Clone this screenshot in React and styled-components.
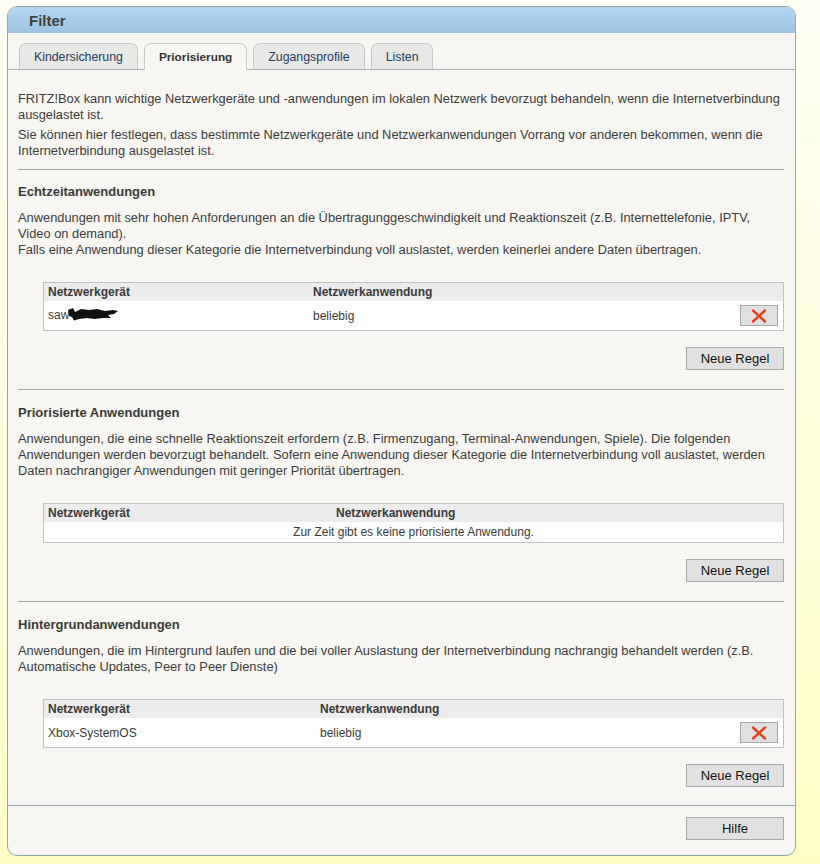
import styled, { createGlobalStyle } from 'styled-components';

const GlobalStyle = createGlobalStyle`
  html, body {
    margin: 0;
    padding: 0;
  }
  body {
    min-height: 864px;
    background: linear-gradient(to bottom, #fffff4 0%, #ffffdc 55%, #ffffc6 100%);
    font-family: "Liberation Sans", Arial, sans-serif;
    color: #3c3c3c;
  }
`;

const Page = styled.div`
  padding: 6px 0 0 7px;
`;

const Panel = styled.div`
  width: 787px;
  border: 1px solid #8fa8a9;
  border-radius: 10px;
  background: #f7f6f2;
  overflow: hidden;
`;

const PanelHeader = styled.div`
  height: 26px;
  display: flex;
  align-items: center;
  padding-left: 21px;
  background: linear-gradient(to bottom, #b4d6f4, #9fc2e1);
  font-size: 15px;
  font-weight: bold;
  color: #404040;
`;

const TabBar = styled.div`
  display: flex;
  gap: 6px;
  padding: 10px 0 0 11px;
  border-bottom: 1px solid #a3b0b1;
`;

const Tab = styled.div`
  height: 25px;
  display: flex;
  align-items: center;
  padding: 0 14px;
  border: 1px solid #c9c9c9;
  border-bottom: none;
  border-radius: 7px 7px 0 0;
  background: ${({ $active }) => ($active ? '#f7f6f2' : '#e8e8e7')};
  color: ${({ $active }) => ($active ? '#333' : '#223d63')};
  font-size: ${({ $active }) => ($active ? '11.8px' : '12.3px')};
  font-weight: ${({ $active }) => ($active ? 'bold' : 'normal')};
  margin-bottom: ${({ $active }) => ($active ? '-1px' : '0')};
  padding-bottom: ${({ $active }) => ($active ? '1px' : '0')};
`;

const Content = styled.div`
  padding: 21px 11px 18px 10px;
  font-size: 12.85px;
  line-height: 16px;
`;

const Text = styled.p`
  margin: ${({ $top }) => $top || 0}px 0 0;
`;

const Divider = styled.div`
  height: 1px;
  background: #9faaab;
  margin-top: ${({ $top }) => $top}px;
`;

const Heading = styled.h3`
  margin: ${({ $top }) => $top}px 0 0;
  font-size: 13px;
  line-height: 16px;
  font-weight: bold;
  color: #3a3a3a;
`;

const RuleTable = styled.table`
  width: calc(100% - 25px);
  margin: 24px 0 0 25px;
  border: 1px solid #c2c2c2;
  border-collapse: collapse;
  font-size: 12px;
  line-height: 14px;
  color: #3a3a3a;
`;

const HeadCell = styled.th`
  height: 18px;
  padding: 0 4px;
  background: #ececec;
  text-align: left;
  font-weight: bold;
  width: ${({ $width }) => ($width ? `${$width}px` : 'auto')};
`;

const Cell = styled.td`
  height: ${({ $tall }) => ($tall ? '29px' : '20px')};
  padding: 0 4px;
  background: #fff;
  text-align: ${({ $center }) => ($center ? 'center' : 'left')};
`;

const ActionCell = styled.td`
  background: #fff;
  width: 44px;
  padding: 0 5px 0 0;
  text-align: right;
`;

const DeleteButton = styled.button`
  width: 38px;
  height: 21px;
  display: inline-flex;
  align-items: center;
  justify-content: center;
  padding: 0;
  background: #e0e0e0;
  border: 1px solid #a6a6a6;
  vertical-align: middle;
`;

const ButtonRow = styled.div`
  display: flex;
  justify-content: flex-end;
  margin-top: ${({ $top }) => $top}px;
`;

const Button = styled.button`
  width: 98px;
  height: 23px;
  padding: 0;
  background: #e1e1e1;
  border: 1px solid #a9a9a9;
  font-family: "Liberation Sans", Arial, sans-serif;
  font-size: 13px;
  color: #111;
`;

const Footer = styled.div`
  border-top: 1px solid #8fa8a9;
  padding: 11px 11px 15px 0;
  display: flex;
  justify-content: flex-end;
`;

const Masked = styled.span`
  display: inline-block;
  vertical-align: middle;
  margin-left: -2px;
`;

const CrossIcon = () => (
  <svg width="16" height="14" viewBox="0 0 16 14">
    <path d="M2 1.5 L14 12.5 M14 1.5 L2 12.5" stroke="#e5401a" strokeWidth="2.4" strokeLinecap="round" />
  </svg>
);

// black marker stroke over part of the device name
const Scribble = () => (
  <Masked>
    <svg width="52" height="14" viewBox="0 0 52 14">
      <path
        d="M1 3 L6 1 L8 5 L14 2 L22 3 L30 2 L38 4 L46 3 L51 4 L47 7 L41 8 L44 11 L36 11 L28 12 L20 11 L12 12 L7 13.5 L5 10 L2 9 Z"
        fill="#111"
      />
    </svg>
  </Masked>
);

const sections = [
  {
    title: 'Echtzeitanwendungen',
    text: [
      'Anwendungen mit sehr hohen Anforderungen an die Übertragunggeschwindigkeit und Reaktionszeit (z.B. Internettelefonie, IPTV, Video on demand).',
      'Falls eine Anwendung dieser Kategorie die Internetverbindung voll auslastet, werden keinerlei andere Daten übertragen.',
    ],
    deviceWidth: 257,
    rows: [{ device: 'saw', masked: true, app: 'beliebig' }],
  },
  {
    title: 'Priorisierte Anwendungen',
    text: [
      'Anwendungen, die eine schnelle Reaktionszeit erfordern (z.B. Firmenzugang, Terminal-Anwendungen, Spiele). Die folgenden Anwendungen werden bevorzugt behandelt. Sofern eine Anwendung dieser Kategorie die Internetverbindung voll auslastet, werden Daten nachrangiger Anwendungen mit geringer Priorität übertragen.',
    ],
    deviceWidth: 280,
    rows: [],
    empty: 'Zur Zeit gibt es keine priorisierte Anwendung.',
  },
  {
    title: 'Hintergrundanwendungen',
    text: [
      'Anwendungen, die im Hintergrund laufen und die bei voller Auslastung der Internetverbindung nachrangig behandelt werden (z.B. Automatische Updates, Peer to Peer Dienste)',
    ],
    deviceWidth: 264,
    rows: [{ device: 'Xbox-SystemOS', app: 'beliebig' }],
  },
];

const Section = ({ section, first }) => (
  <>
    <Heading $top={first ? 14 : 15}>{section.title}</Heading>
    <Text $top={10}>
      {section.text.map((line, i) => (
        <span key={i}>
          {i > 0 && <br />}
          {line}
        </span>
      ))}
    </Text>
    <RuleTable>
      <thead>
        <tr>
          <HeadCell $width={section.deviceWidth}>Netzwerkgerät</HeadCell>
          <HeadCell>Netzwerkanwendung</HeadCell>
          <HeadCell />
        </tr>
      </thead>
      <tbody>
        {section.rows.length === 0 ? (
          <tr>
            <Cell colSpan={3} $center>{section.empty}</Cell>
          </tr>
        ) : (
          section.rows.map((row) => (
            <tr key={row.device}>
              <Cell $tall>
                {row.device}
                {row.masked && <Scribble />}
              </Cell>
              <Cell $tall>{row.app}</Cell>
              <ActionCell>
                <DeleteButton aria-label="Löschen">
                  <CrossIcon />
                </DeleteButton>
              </ActionCell>
            </tr>
          ))
        )}
      </tbody>
    </RuleTable>
    <ButtonRow $top={16}>
      <Button>Neue Regel</Button>
    </ButtonRow>
  </>
);

export default function App() {
  return (
    <>
      <GlobalStyle />
      <Page>
        <Panel>
          <PanelHeader>Filter</PanelHeader>
          <TabBar>
            <Tab>Kindersicherung</Tab>
            <Tab $active>Priorisierung</Tab>
            <Tab>Zugangsprofile</Tab>
            <Tab>Listen</Tab>
          </TabBar>
          <Content>
            <Text>
              FRITZ!Box kann wichtige Netzwerkgeräte und -anwendungen im lokalen Netzwerk bevorzugt behandeln, wenn die Internetverbindung ausgelastet ist.
            </Text>
            <Text $top={4}>
              Sie können hier festlegen, dass bestimmte Netzwerkgeräte und Netzwerkanwendungen Vorrang vor anderen bekommen, wenn die Internetverbindung ausgelastet ist.
            </Text>
            {sections.map((section, i) => (
              <div key={section.title}>
                <Divider $top={i === 0 ? 10 : 19} />
                <Section section={section} first={i === 0} />
              </div>
            ))}
          </Content>
          <Footer>
            <Button>Hilfe</Button>
          </Footer>
        </Panel>
      </Page>
    </>
  );
}
